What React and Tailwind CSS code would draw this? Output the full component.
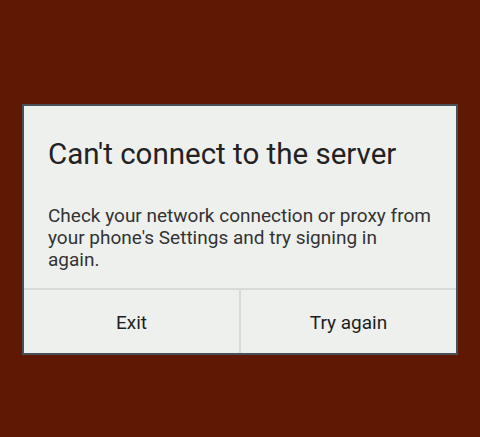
export default function App() {
  return (
    <div className="w-[480px] h-[437px] bg-[#5e1803] pt-[104px] pl-[22px]" style={{ fontFamily: 'Roboto, "Noto Sans", sans-serif' }}>
      <div className="w-[436px] h-[251px] border-2 border-[#4a5058] bg-[#eef0ee] flex flex-col">
        <div className="px-[24px] pt-[31px] h-[182px]">
          <div className="text-[29.5px] leading-[34px] text-[#222222] whitespace-nowrap">Can't connect to the server</div>
          <div className="mt-[34px] text-[19px] leading-[22px] text-[#333333] whitespace-nowrap">
            Check your network connection or proxy from<br />your phone's Settings and try signing in<br />again.
          </div>
        </div>
        <div className="flex-1 flex border-t-2 border-[#d8dad8]">
          <div className="flex-1 flex items-center justify-center pt-[3px] text-[19px] text-[#1e1e1e]">Exit</div>
          <div className="w-[2px] bg-[#d8dad8]"></div>
          <div className="flex-1 flex items-center justify-center pt-[3px] text-[19px] text-[#1e1e1e]">Try again</div>
        </div>
      </div>
    </div>
  );
}
